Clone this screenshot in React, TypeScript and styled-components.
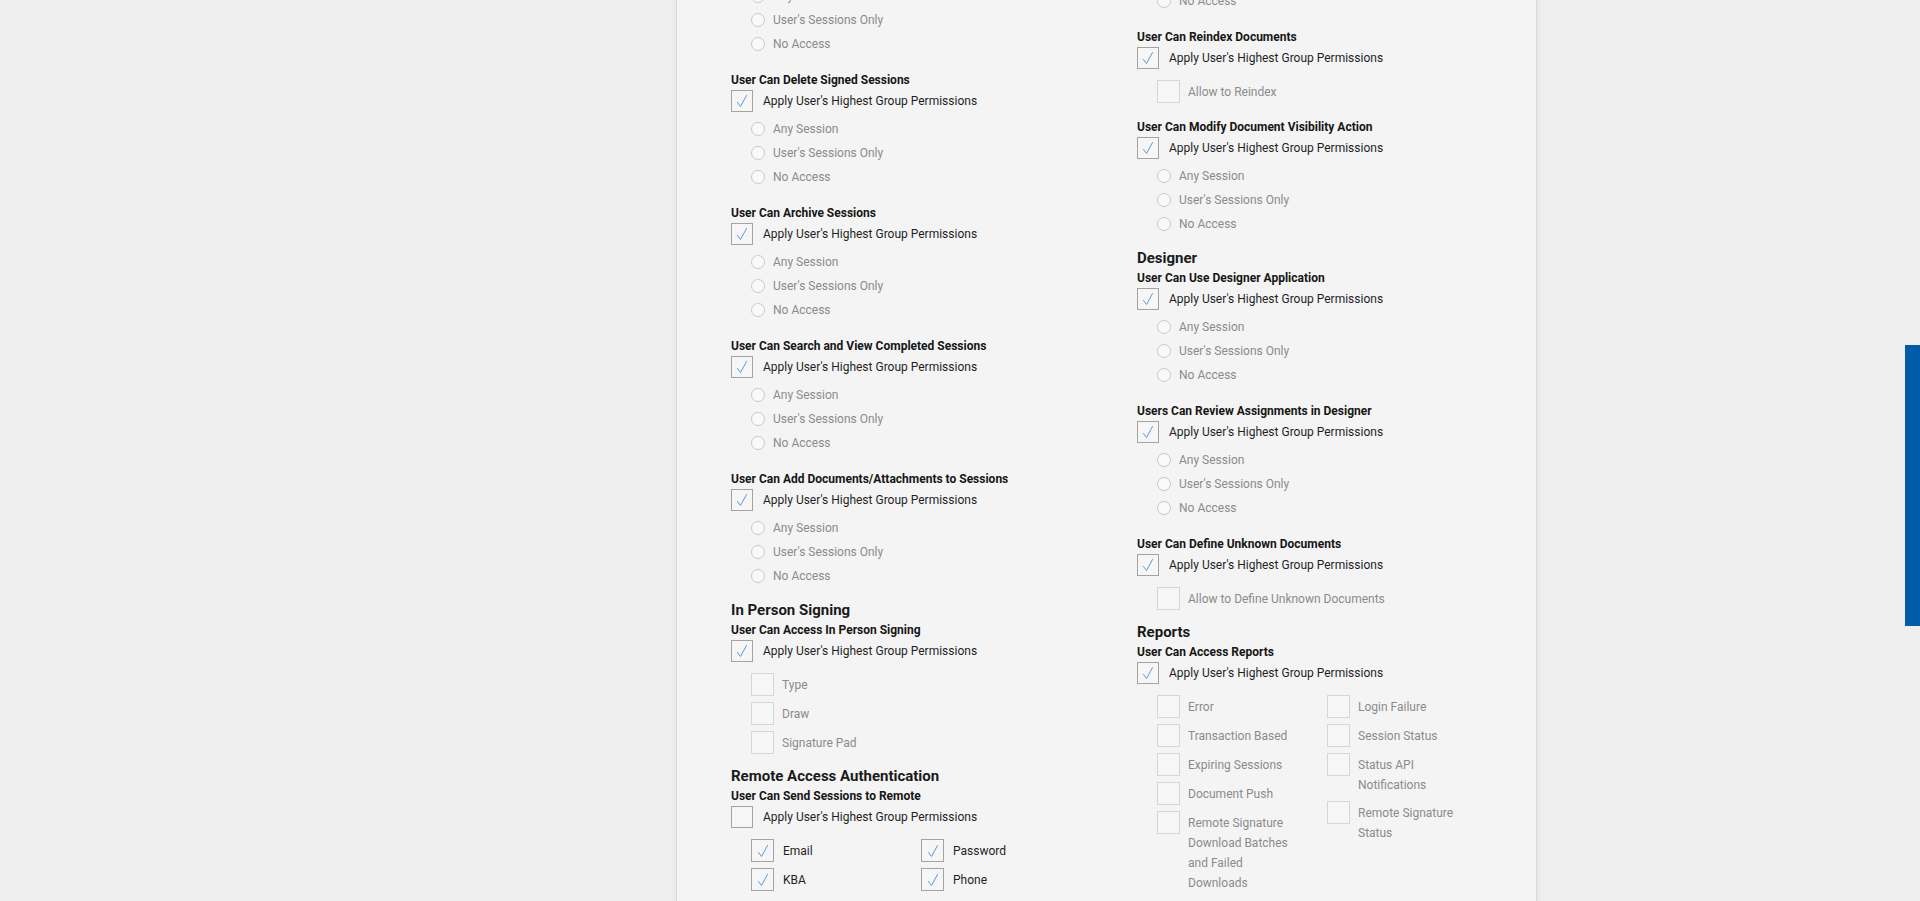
import React, { useLayoutEffect, useRef } from 'react';
import styled, { createGlobalStyle } from 'styled-components';

const GlobalStyle = createGlobalStyle`
  html, body {
    margin: 0;
    padding: 0;
    height: 100%;
  }
  body {
    background: #efefef;
    font-family: Roboto, "Liberation Sans", Arial, sans-serif;
    color: #1d1d1d;
  }
`;

type Opt = { label: string; checked?: boolean };

type Block =
  | { kind: 'heading'; text: string }
  | { kind: 'radios'; title: string; applied: boolean }
  | { kind: 'checks'; title: string; applied: boolean; cols: Opt[][] };

const radioOptions = ['Any Session', "User's Sessions Only", 'No Access'];

const leftColumn: Block[] = [
  { kind: 'heading', text: 'Sessions' },
  { kind: 'radios', title: 'User Can Edit Sessions', applied: true },
  { kind: 'radios', title: 'User Can Delete Sessions', applied: true },
  { kind: 'radios', title: 'User Can Delete Signed Sessions', applied: true },
  { kind: 'radios', title: 'User Can Archive Sessions', applied: true },
  { kind: 'radios', title: 'User Can Search and View Completed Sessions', applied: true },
  { kind: 'radios', title: 'User Can Add Documents/Attachments to Sessions', applied: true },
  { kind: 'heading', text: 'In Person Signing' },
  {
    kind: 'checks',
    title: 'User Can Access In Person Signing',
    applied: true,
    cols: [[{ label: 'Type' }, { label: 'Draw' }, { label: 'Signature Pad' }]],
  },
  { kind: 'heading', text: 'Remote Access Authentication' },
  {
    kind: 'checks',
    title: 'User Can Send Sessions to Remote',
    applied: false,
    cols: [
      [
        { label: 'Email', checked: true },
        { label: 'KBA', checked: true },
      ],
      [
        { label: 'Password', checked: true },
        { label: 'Phone', checked: true },
      ],
    ],
  },
];

const rightColumn: Block[] = [
  { kind: 'heading', text: 'Documents' },
  {
    kind: 'checks',
    title: 'User Can Download Documents',
    applied: true,
    cols: [[{ label: 'Allow to Download' }]],
  },
  { kind: 'radios', title: 'User Can Modify Documents', applied: true },
  {
    kind: 'checks',
    title: 'User Can Reindex Documents',
    applied: true,
    cols: [[{ label: 'Allow to Reindex' }]],
  },
  { kind: 'radios', title: 'User Can Modify Document Visibility Action', applied: true },
  { kind: 'heading', text: 'Designer' },
  { kind: 'radios', title: 'User Can Use Designer Application', applied: true },
  { kind: 'radios', title: 'Users Can Review Assignments in Designer', applied: true },
  {
    kind: 'checks',
    title: 'User Can Define Unknown Documents',
    applied: true,
    cols: [[{ label: 'Allow to Define Unknown Documents' }]],
  },
  { kind: 'heading', text: 'Reports' },
  {
    kind: 'checks',
    title: 'User Can Access Reports',
    applied: true,
    cols: [
      [
        { label: 'Error' },
        { label: 'Transaction Based' },
        { label: 'Expiring Sessions' },
        { label: 'Document Push' },
        { label: 'Remote Signature Download Batches and Failed Downloads' },
      ],
      [
        { label: 'Login Failure' },
        { label: 'Session Status' },
        { label: 'Status API Notifications' },
        { label: 'Remote Signature Status' },
      ],
    ],
  },
];

const Viewport = styled.div`
  position: relative;
  height: 100vh;
  overflow: hidden;
`;

const Scroller = styled.div`
  height: 100%;
  overflow-y: scroll;
  scrollbar-width: none;
  &::-webkit-scrollbar {
    display: none;
  }
`;

const ScrollThumb = styled.div`
  position: absolute;
  right: 0;
  top: 345px;
  width: 15px;
  height: 281px;
  background: #005ca9;
`;

const Page = styled.div`
  padding-left: 676px;
`;

const Panel = styled.div`
  width: 861px;
  min-height: 1400px;
  box-sizing: border-box;
  background: #f4f4f4;
  border-left: 1px solid #d9d9d9;
  border-right: 1px solid #d9d9d9;
  box-shadow: -2px 0 4px rgba(0, 0, 0, 0.04), 2px 0 4px rgba(0, 0, 0, 0.04);
  padding: 30px 0 120px 54px;
`;

const Columns = styled.div`
  display: grid;
  grid-template-columns: 406px 1fr;
  align-items: start;
`;

const Column = styled.div`
  display: flex;
  flex-direction: column;
`;

const SectionHeading = styled.h3`
  margin: 0;
  font-size: 15px;
  line-height: 18px;
  font-weight: 700;
  color: #1a1a1a;
`;

const PermissionBlock = styled.div`
  padding: 4px 0 13px;
`;

const PermissionTitle = styled.div`
  font-size: 12px;
  line-height: 14px;
  font-weight: 700;
  color: #161616;
`;

const ApplyRow = styled.label`
  display: flex;
  align-items: center;
  gap: 10px;
  margin-top: 3px;
  height: 22px;
  font-size: 12px;
  color: #1f1f1f;
`;

const Box = styled.span<{ $size: number; $muted?: boolean }>`
  flex: none;
  display: flex;
  align-items: center;
  justify-content: center;
  width: ${(p) => p.$size}px;
  height: ${(p) => p.$size}px;
  box-sizing: border-box;
  border: 1px solid ${(p) => (p.$muted ? '#d6d6d6' : '#a3a3a3')};
  background: #f6f6f6;
`;

const RadioList = styled.div`
  margin-top: 5px;
  padding-left: 20px;
`;

const RadioRow = styled.label`
  display: flex;
  align-items: center;
  gap: 8px;
  height: 24px;
  font-size: 12px;
  color: #8b8b8b;
`;

const RadioDot = styled.span`
  flex: none;
  width: 14px;
  height: 14px;
  box-sizing: border-box;
  border-radius: 50%;
  border: 1px solid #c9c9c9;
  background: #f9f9f9;
`;

const CheckGrid = styled.div`
  display: flex;
  margin-top: 11px;
  padding-left: 20px;
`;

const CheckColumn = styled.div<{ $fixed: boolean }>`
  display: flex;
  flex-direction: column;
  gap: 6px;
  width: ${(p) => (p.$fixed ? '170px' : 'auto')};
`;

const CheckItem = styled.label<{ $on?: boolean; $gap: number }>`
  display: flex;
  align-items: flex-start;
  gap: ${(p) => p.$gap}px;
  font-size: 12px;
  color: ${(p) => (p.$on ? '#1f1f1f' : '#8b8b8b')};
`;

const CheckText = styled.span<{ $narrow: boolean }>`
  line-height: 20px;
  padding-top: 2px;
  max-width: ${(p) => (p.$narrow ? '110px' : 'none')};
`;

const Tick = () => (
  <svg width="18" height="18" viewBox="0 0 18 18" fill="none">
    <path d="M4.5 10.5 L7.5 14.5 L13.5 3.5" stroke="#5b9ad6" strokeWidth="1" strokeLinecap="round" strokeLinejoin="round" />
  </svg>
);

const Permission = ({ block }: { block: Exclude<Block, { kind: 'heading' }> }) => (
  <PermissionBlock>
    <PermissionTitle>{block.title}</PermissionTitle>
    <ApplyRow>
      <Box $size={22}>{block.applied && <Tick />}</Box>
      Apply User's Highest Group Permissions
    </ApplyRow>
    {block.kind === 'radios' ? (
      <RadioList>
        {radioOptions.map((o) => (
          <RadioRow key={o}>
            <RadioDot />
            {o}
          </RadioRow>
        ))}
      </RadioList>
    ) : (
      <CheckGrid>
        {block.cols.map((col, i) => (
          <CheckColumn key={i} $fixed={block.cols.length > 1}>
            {col.map((o) => (
              <CheckItem key={o.label} $on={o.checked} $gap={o.checked ? 9 : 8}>
                <Box $size={23} $muted={!o.checked}>
                  {o.checked && <Tick />}
                </Box>
                <CheckText $narrow={block.cols.length > 1}>{o.label}</CheckText>
              </CheckItem>
            ))}
          </CheckColumn>
        ))}
      </CheckGrid>
    )}
  </PermissionBlock>
);

const renderColumn = (blocks: Block[]) =>
  blocks.map((b, i) =>
    b.kind === 'heading' ? <SectionHeading key={i}>{b.text}</SectionHeading> : <Permission key={i} block={b} />
  );

export default function App() {
  const ref = useRef<HTMLDivElement>(null);

  useLayoutEffect(() => {
    if (ref.current) ref.current.scrollTop = 245;
  }, []);

  return (
    <Viewport>
      <GlobalStyle />
      <Scroller ref={ref}>
        <Page>
          <Panel>
            <Columns>
              <Column>{renderColumn(leftColumn)}</Column>
              <Column>{renderColumn(rightColumn)}</Column>
            </Columns>
          </Panel>
        </Page>
      </Scroller>
      <ScrollThumb />
    </Viewport>
  );
}
